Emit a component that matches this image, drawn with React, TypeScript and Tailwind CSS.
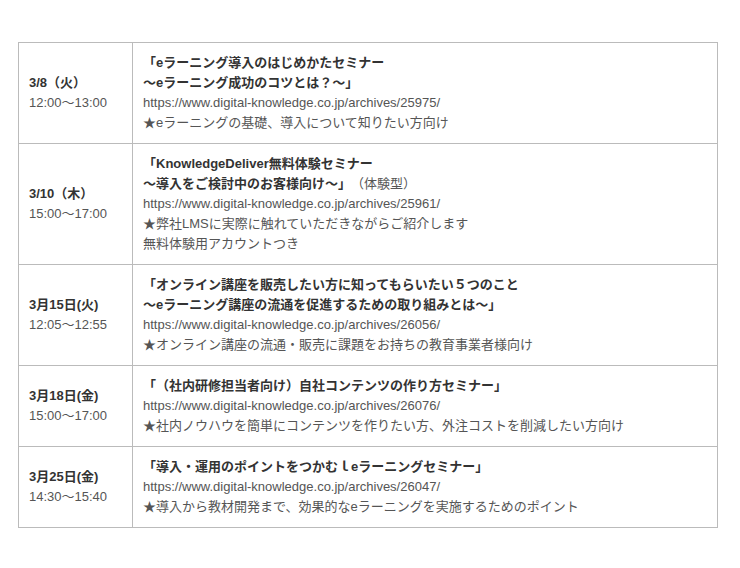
const rows = [
  {
    date: "3/8（火）",
    time: "12:00〜13:00",
    title: ["「eラーニング導入のはじめかたセミナー", "〜eラーニング成功のコツとは？〜」"],
    suffix: "",
    url: "https://www.digital-knowledge.co.jp/archives/25975/",
    notes: ["★eラーニングの基礎、導入について知りたい方向け"],
  },
  {
    date: "3/10（木）",
    time: "15:00〜17:00",
    title: ["「KnowledgeDeliver無料体験セミナー", "〜導入をご検討中のお客様向け〜」"],
    suffix: "（体験型）",
    url: "https://www.digital-knowledge.co.jp/archives/25961/",
    notes: ["★弊社LMSに実際に触れていただきながらご紹介します", "無料体験用アカウントつき"],
  },
  {
    date: "3月15日(火)",
    time: "12:05〜12:55",
    title: [
      "「オンライン講座を販売したい方に知ってもらいたい５つのこと",
      "〜eラーニング講座の流通を促進するための取り組みとは〜」",
    ],
    suffix: "",
    url: "https://www.digital-knowledge.co.jp/archives/26056/",
    notes: ["★オンライン講座の流通・販売に課題をお持ちの教育事業者様向け"],
  },
  {
    date: "3月18日(金)",
    time: "15:00〜17:00",
    title: ["「（社内研修担当者向け）自社コンテンツの作り方セミナー」"],
    suffix: "",
    url: "https://www.digital-knowledge.co.jp/archives/26076/",
    notes: ["★社内ノウハウを簡単にコンテンツを作りたい方、外注コストを削減したい方向け"],
  },
  {
    date: "3月25日(金)",
    time: "14:30〜15:40",
    title: ["「導入・運用のポイントをつかむｌeラーニングセミナー」"],
    suffix: "",
    url: "https://www.digital-knowledge.co.jp/archives/26047/",
    notes: ["★導入から教材開発まで、効果的なeラーニングを実施するためのポイント"],
  },
];

export default function App() {
  return (
    <div
      className="min-h-[568px] w-[740px] bg-white pt-[42px] pl-[18px] [text-spacing-trim:space-all]"
      style={{ fontFamily: '"Liberation Sans", "Noto Sans CJK JP", sans-serif' }}
    >
      <table className="w-[700px] border-collapse text-[13px] leading-[20px] text-[#555]">
        <tbody>
          {rows.map((row) => (
            <tr key={row.url}>
              <td className="w-[114px] border border-[#bbb] px-[10px] py-[10px] align-middle">
                <div className="font-bold text-[#333]">{row.date}</div>
                <div>{row.time}</div>
              </td>
              <td className="border border-[#bbb] px-[10px] py-[10px] align-top">
                {row.title.map((line, i) => (
                  <div key={i} className="font-bold text-[#333]">
                    {line}
                    {i === row.title.length - 1 && row.suffix && (
                      <span className="font-normal text-[#555]">{row.suffix}</span>
                    )}
                  </div>
                ))}
                <div>{row.url}</div>
                {row.notes.map((n) => (
                  <div key={n}>{n}</div>
                ))}
              </td>
            </tr>
          ))}
        </tbody>
      </table>
    </div>
  );
}
